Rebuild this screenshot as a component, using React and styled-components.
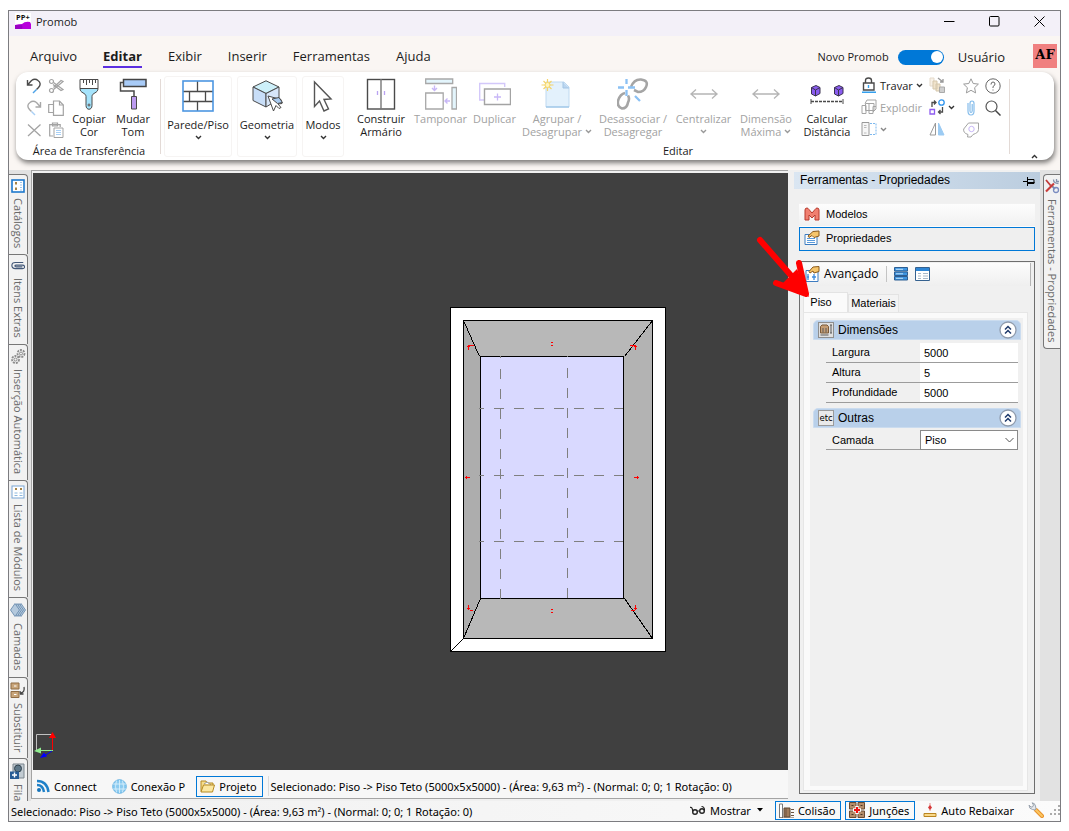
import React from "react"
import styled, { createGlobalStyle } from "styled-components"

const GlobalStyle = createGlobalStyle`
    * {
        box-sizing: border-box;
    }

    body {
        margin: 0;
        background: #FFFFFF;
        color: #1C1C1C;
        font-family: "Open Sans", "Noto Sans", sans-serif;
        font-size: 11px;
        line-height: 13px;
    }

    button, input, select {
        font: inherit;
        color: inherit;
    }

    button {
        display: flex;
        align-items: center;
        padding: 0;
        border: none;
        background: none;
        white-space: nowrap;
        cursor: pointer;
    }

    svg {
        display: block;
        flex: none;
    }
`

/* ---------- window ---------- */

const Page = styled.div`
    height: 100vh;
    padding: 10px 8px 9px;
`
const Window = styled.div`
    display: flex;
    flex-direction: column;
    height: 100%;
    border: 1px solid #7C7C80;
    background: #FAF6F3;
    overflow: hidden;
`
const TitleBar = styled.header`
    display: flex;
    align-items: center;
    gap: 5px;
    height: 25px;
    padding: 0 15px 5px 6px;
    flex: none;
    background: #F3F0F8;
`
const WindowButtons = styled.div`
    display: flex;
    gap: 34px;
    margin-left: auto;
`
const MenuBar = styled.div`
    display: flex;
    align-items: center;
    height: 36px;
    flex: none;
    padding: 6px 3px 0 21px;
    font-size: 13px;
    line-height: 18px;
`
const Menu = styled.nav`
    display: flex;
    gap: 26px;
`
const MenuItem = styled.a`
    padding-bottom: 1px;
    color: #1C1C1C;
    text-decoration: none;
    border-bottom: 2px solid ${({ $active }) => ($active ? "#5B2FE0" : "transparent")};
    font-weight: ${({ $active }) => ($active ? 700 : 400)};
`
const UserArea = styled.div`
    display: flex;
    align-items: center;
    gap: 9px;
    margin-left: auto;
`
const ToggleLabel = styled.label`
    font-size: 11px;
`
const Toggle = styled.input`
    appearance: none;
    display: flex;
    align-items: center;
    justify-content: flex-end;
    width: 46px;
    height: 15px;
    margin: 0 5px 0 0;
    padding: 0 1px;
    border-radius: 8px;
    background: #0078D7;

    &::before {
        content: "";
        width: 12px;
        height: 12px;
        border-radius: 50%;
        background: #FFFFFF;
    }
`
const Avatar = styled.div`
    display: flex;
    justify-content: center;
    width: 24px;
    height: 24px;
    margin: 0 0 2px 19px;
    background: #F08080;
    color: #000000;
    font: 700 13px/22px "DejaVu Serif", serif;
`

/* ---------- ribbon ---------- */

const Ribbon = styled.section`
    display: flex;
    height: 88px;
    flex: none;
    margin: 0 6px 0 7px;
    padding: 3px 8px 3px 7px;
    border-radius: 12px;
    background: #FFFFFF;
    box-shadow: 1px 3px 5px #00000080;
`
const Group = styled.div`
    display: flex;
    flex-direction: column;
    justify-content: space-between;
    padding: ${({ $pad }) => $pad};
`
const GroupRow = styled.div`
    display: flex;
`
const GroupTitle = styled.div`
    text-align: center;
`
const Divider = styled.div`
    width: 1px;
    margin: 4px 3px 3px 0;
    background: #E3DAD6;
`
const IconGrid = styled.div`
    display: grid;
    grid-template-columns: repeat(${({ $cols }) => $cols}, ${({ $width }) => $width || 22}px);
    grid-auto-rows: 22px;
    height: 66px;
`
const IconButton = styled.button`
    justify-content: center;
`
const Tool = styled.button`
    flex-direction: column;
    width: ${({ $width }) => $width}px;
    padding-top: 3px;
    color: ${({ $off }) => ($off ? "#A2A2A2" : "#1C1C1C")};

    svg {
        margin-bottom: 2px;
    }
`
const ToolCard = styled.button`
    flex-direction: column;
    width: ${({ $width }) => $width}px;
    margin: 1px 5px 0 0;
    padding-top: 3px;
    border: 1px solid #F6F4F3;
    border-radius: 3px;

    svg {
        margin-bottom: 6px;
    }

    svg + svg {
        margin: 4px 0 0;
    }
`
const LabelLine = styled.span`
    display: flex;
    align-items: center;
    gap: 3px;
    min-height: 13px;

    svg {
        margin: 0;
    }
`
const SmallTools = styled.div`
    display: grid;
    grid-auto-rows: 22px;
    width: 68px;
    margin-left: 2px;
`
const SmallTool = styled.button`
    gap: 3px;
    padding-bottom: 2px;
    color: ${({ $off }) => ($off ? "#A2A2A2" : "#1C1C1C")};
`
const Collapse = styled.button`
    align-items: flex-end;
    margin-left: auto;
    padding: 0 8px 0 0;

    svg {
        margin-bottom: -2px;
    }
`

/* ---------- workspace ---------- */

const Workspace = styled.main`
    display: flex;
    flex: 1;
    min-height: 0;
    margin-top: 10px;
    background: #F0F0F0;
`
const SideStrip = styled.div`
    display: flex;
    flex-direction: column;
    align-items: ${({ $right }) => ($right ? "flex-end" : "flex-start")};
    flex: none;
    width: ${({ $right }) => ($right ? 20 : 22)}px;
    padding: 4px 0 2px;
    overflow: hidden;
    background: #E2E2E2;
`
const SideTab = styled.button`
    flex: none;
    gap: 5px;
    width: ${({ $right }) => ($right ? 17 : 19)}px;
    padding: ${({ $right }) => ($right ? "3px 0 5px" : "4px 0 6px")};
    border: 1px solid #777777;
    border-width: ${({ $right }) => ($right ? "1px 0 1px 1px" : "1px 1px 0 0")};
    border-radius: ${({ $right }) => ($right ? "4px 0 0 4px" : "0 4px 0 0")};
    background: #F2F2F2;
    color: #6A6A6A;
    writing-mode: vertical-rl;
`
const Center = styled.div`
    display: flex;
    flex-direction: column;
    flex: 1;
    min-width: 0;
    margin-bottom: 2px;
    border: 1px solid #A4A4A4;
    border-right: none;
`
const Viewport = styled.div`
    position: relative;
    flex: 1;
    min-height: 0;
    margin: 2px 0 0 1px;
    overflow: hidden;
    background: #404040;
`
const Room = styled.svg`
    position: absolute;
    left: 417px;
    top: 134px;
`
const Axes = styled.svg`
    position: absolute;
    left: 0;
    bottom: 12px;
`
const ViewBar = styled.div`
    display: flex;
    align-items: center;
    height: 28px;
    flex: none;
    padding-top: 4px;
    background: #F7F7F7;
    font-family: "Noto Sans", "Open Sans", sans-serif;
`
const BarButton = styled.button`
    gap: 4px;
    height: ${({ $tall }) => ($tall ? 21 : 19)}px;
    padding: 0 5px 0 3px;
    border: 1px solid ${({ $active }) => ($active ? "#0078D7" : "transparent")};
    margin-right: ${({ $tall }) => ($tall ? 5 : 4)}px;
    color: #000000;
`
const ViewInfo = styled.span`
    padding: 4px 0 3px 2px;
    border-left: 1px solid #DCDCDC;
    white-space: nowrap;
    color: #000000;
`

/* ---------- property panel ---------- */

const Panel = styled.aside`
    position: relative;
    display: flex;
    flex-direction: column;
    width: 252px;
    flex: none;
    padding: 2px 0 7px 6px;
    color: #000000;
    font-family: "Liberation Sans", Arial, sans-serif;
    font-size: 12px;
`
const PanelHeader = styled.div`
    display: flex;
    align-items: center;
    justify-content: space-between;
    height: 17px;
    margin-bottom: 14px;
    padding: 0 5px 0 6px;
    background: linear-gradient(90deg, #DAE6F2, #BBCDDF);
`
const PanelRow = styled.button`
    gap: 6px;
    height: 24px;
    margin: 0 5px;
    padding: 0 4px 2px;
    border: 1px solid ${({ $active }) => ($active ? "#0078D7" : "transparent")};
    background: ${({ $active }) => ($active ? "#EFEFEF" : "linear-gradient(#FDFDFD, #F1F1F1)")};
    font-size: 11px;
`
const PanelBox = styled.div`
    display: flex;
    flex-direction: column;
    flex: 1;
    min-height: 0;
    margin: 10px 5px 0;
    padding: 1px 6px 2px 3px;
    border: 1px solid #6E6E6E;
    background: #F0F0F0;
`
const PanelTools = styled.div`
    display: flex;
    align-items: center;
    gap: 7px;
    height: 23px;
    flex: none;
    margin-right: -3px;
    padding: 0 0 2px 2px;
    border-right: 1px solid #B5B5B5;
    background: linear-gradient(#FCFCFC, #EFEFEF);
    font: 12px/14px "Open Sans", sans-serif;

    button {
        gap: 3px;
    }
`
const ToolDivider = styled.span`
    width: 1px;
    height: 16px;
    background: #C4C4C4;
`
const Tabs = styled.div`
    display: flex;
    align-items: flex-end;
    flex: none;
    height: 26px;
    padding-top: 6px;
`
const Tab = styled.button`
    justify-content: center;
    width: ${({ $active }) => ($active ? 45 : 51)}px;
    height: ${({ $active }) => ($active ? 20 : 18)}px;
    padding-right: ${({ $active }) => ($active ? 9 : 0)}px;
    border: 1px solid #E3E3E3;
    border-bottom: none;
    background: ${({ $active }) => ($active ? "#FAFAFA" : "#F3F3F3")};
    font-size: 11px;
`
const TabPage = styled.div`
    flex: 1;
    min-height: 0;
    padding: 5px 4px 4px 6px;
    border: 1px solid #E6E6E6;
    background: #FAFAFA;
`
const PageBody = styled.form`
    height: 100%;
    padding: 2px 2px 0 3px;
    background: #F0F0F0;
    font-size: 11px;
`
const SectionHead = styled.div`
    display: flex;
    align-items: center;
    gap: 4px;
    height: 20px;
    margin-bottom: ${({ $gap }) => $gap}px;
    padding: 0 3px 0 4px;
    border: 1px solid #CBDCEF;
    border-radius: 5px 5px 0 0;
    background: #B9D0EA;
    font-size: 12px;

    button {
        margin-left: auto;
    }
`
const Field = styled.div`
    display: grid;
    grid-template-columns: 94px 1fr;
    align-items: center;
    height: 20px;
    margin: 0 3px 0 13px;
    border-bottom: 1px solid #9C9C9C;

    label {
        padding-left: 6px;
    }
`
const Fields = styled.div`
    margin-bottom: 5px;
`
const TextBox = styled.input`
    width: 100%;
    min-width: 0;
    height: 19px;
    padding: 0 4px;
    border: none;
    background: #FFFFFF;
`
const SelectBox = styled.div`
    display: grid;
    align-items: center;

    > * {
        grid-area: 1 / 1;
    }

    svg {
        justify-self: end;
        margin-right: 4px;
        pointer-events: none;
    }
`
const Select = styled.select`
    appearance: none;
    width: 100%;
    height: 20px;
    padding: 0 4px;
    border: 1px solid #8A8A8A;
    border-radius: 0;
    background: #FFFFFF;
`
const Pointer = styled.svg`
    position: absolute;
    left: -33px;
    top: 65px;
    z-index: 2;
    pointer-events: none;
`

/* ---------- status bar ---------- */

const StatusBar = styled.footer`
    display: flex;
    align-items: center;
    height: 20px;
    flex: none;
    padding-left: 2px;
    background: linear-gradient(90deg, #F0F0F0, #FBFBFB);
    color: #000000;
    font-family: "Noto Sans", "Open Sans", sans-serif;
    white-space: nowrap;
`
const StatusActions = styled.div`
    display: flex;
    align-items: center;
    margin: 0 0 2px auto;

    button:last-of-type {
        margin-right: 0;
        padding-right: 4px;
    }
`

/* ---------- icons ---------- */

const Icon = ({ w = 16, h = w, box, children }) => (
    <svg width={w} height={h} viewBox={box || `0 0 ${w} ${h}`} fill="none" stroke="#4A4A4A" aria-hidden="true">
        {children}
    </svg>
)

const Chevron = ({ color = "#333333", up }) => (
    <Icon w={7} h={5}>
        <path d={up ? "M1 4 3.5 1.5 6 4" : "M1 1 3.5 3.5 6 1"} stroke={color} strokeWidth="1.4" />
    </Icon>
)

const AppIcon = () => (
    <Icon>
        <rect width="16" height="16" fill="#FFFFFF" stroke="none" />
        <text x="1" y="7" fontSize="7.5" fontWeight="700" fill="#111111" stroke="none" fontFamily="Open Sans">PP+</text>
        <path d="M0 12q4-1 7-1 3-3 8-2l1 2v5H0z" fill="#B800DC" stroke="none" />
        <path d="M0 12h7q1 2 0 4H0z" fill="#9A00C4" stroke="none" />
    </Icon>
)
const UndoIcon = ({ color = "#4A4A4A", tip = "#4FA3E8", flip }) => (
    <Icon>
        <g transform={flip ? "matrix(-1 0 0 1 16 0)" : undefined} strokeWidth="1.4">
            <path d="M1.5 2v5h5M1.5 7l4-4.500Q9 0 12 2.500q4 3 .5 7l-2 2" stroke={color} />
            <path d="M10.500 11.500 7 15" stroke={tip} />
        </g>
    </Icon>
)
const CutIcon = () => (
    <Icon>
        <g stroke="#A3A3A3" strokeWidth="1.2">
            <circle cx="3.500" cy="3.500" r="2" />
            <circle cx="3.500" cy="12.500" r="2" />
            <path d="M5.500 4.500 15 11.500l-2 1-8-6M5.500 11.500 15 3.500l-2-1-7.500 7" />
        </g>
    </Icon>
)
const CopyIcon = () => (
    <Icon>
        <g stroke="#A3A3A3" strokeWidth="1.2">
            <path d="M5 12.500H.7v-8h5" />
            <path d="M5.500 15.300V1h6L15.300 5v10.300z" fill="#FFFFFF" />
            <path d="M11.500 1v4h3.800" />
        </g>
    </Icon>
)
const DeleteIcon = () => (
    <Icon>
        <path d="M2 2.500 14.500 14M14.500 2.500 2 14" stroke="#A3A3A3" strokeWidth="1.3" />
    </Icon>
)
const PasteIcon = () => (
    <Icon>
        <path d="M5 14H1.700V2.700h10.500V5M4.500 1h5v3h-5z" stroke="#A3A3A3" strokeWidth="1.2" />
        <path d="M6 6h9v9.500H6z" fill="#FFFFFF" stroke="#A3A3A3" />
        <path d="M8 8.500h5M8 10.500h5M8 12.500h5" stroke="#A9D0F5" />
    </Icon>
)
const BrushIcon = () => (
    <Icon w={32}>
        <path d="M7 1.500h18v9H7zM10.500 2v3M13.500 2v5M16.500 2v3M19.500 2v5M22.500 2v3" />
        <path d="M7 10.500h18c0 5-6 4-6 8v9c0 5-6 5-6 0v-9c0-4-6-3-6-8z" fill="#A5E3FB" />
        <circle cx="16" cy="27" r="1" fill="#FFFFFF" />
    </Icon>
)
const RollerIcon = () => (
    <Icon w={32}>
        <path d="M6.500 1.500H29v7H6.500z" fill="#A8CBF7" stroke="#444444" strokeWidth="1.500" />
        <path d="M6 4.500H3.500v8.500h13.500v6" strokeWidth="1.500" />
        <path d="M14.500 18.500h5v12.500h-5z" fill="#BC9BF0" />
    </Icon>
)
const WallIcon = () => (
    <Icon w={32}>
        <path d="M1 11.500h30M1 21.500h30M15.500 1v10M15.500 22v9M7.500 12v9M23.500 12v9" strokeWidth="1.300" />
        <rect x="1" y="1" width="30" height="30" stroke="#4D96E2" strokeWidth="1.600" />
    </Icon>
)
const CubeIcon = () => (
    <Icon w={32}>
        <path d="M2 7 15 .8 28 7 15 13.500z" fill="#CDF0FA" />
        <path d="M2 7v13.500L15 27V13.500z" fill="#C8DEF8" />
        <path d="M15 13.500 28 7v12l-13 8z" fill="#D7E6F9" />
        <path d="m17 16 13 3.500 1 4-4 .5 3 3.500-2 1-3-3-2.500 5.500z" fill="#FFFFFF" />
        <path d="m21 19 7-1.500 3.500 5-5 1z" fill="#A9CBF0" />
    </Icon>
)
const CursorIcon = () => (
    <Icon w={32}>
        <path d="M7.500 2v24.500l5-5.500 4.500 10 4.500-2-4.500-9.500 7-.5z" stroke="#555555" strokeWidth="1.400" />
    </Icon>
)
const CabinetIcon = () => (
    <Icon w={32}>
        <rect x="2.500" y="1.500" width="27" height="29.500" strokeWidth="1.400" />
        <path d="M16 1v30" stroke="#777777" strokeWidth="1.400" />
        <path d="M12.500 13v4M19.500 13v4" stroke="#B9A2F2" strokeWidth="1.300" />
    </Icon>
)
const TamponarIcon = () => (
    <Icon w={32}>
        <g stroke="#A8A8A8" strokeWidth="1.300">
            <path d="M.7 1h27v4.500H.7zM27 9.500h4.500V31H27z" fill="#E3F5FC" />
            <path d="M.7 15h17.500v16H.7z" />
        </g>
        <path d="M9.500 7.500V12m-2.500-2 2.500 2.500L12 10M25 23h-5m2.500-2.500L20 23l2.500 2.500" stroke="#C8B7F7" strokeWidth="1.400" />
    </Icon>
)
const DuplicateIcon = () => (
    <Icon w={32}>
        <path d="M5 22H.7V5.500h25V9" stroke="#D3C8FA" strokeWidth="1.400" />
        <path d="M5.500 11h26v15.500h-26z" fill="#FFFFFF" stroke="#A3A3A3" strokeWidth="1.400" />
        <path d="M18.500 15.500v7M15 19h7" stroke="#C8B7F7" strokeWidth="1.300" />
    </Icon>
)
const GroupIcon = () => (
    <Icon w={32}>
        <path d="M5 4h18l5 5v20H5z" fill="#E3F1FC" stroke="#BFD9F0" />
        <path d="M22 4v6h6" fill="#BBD6F0" stroke="#A3C5E5" />
        <path d="M5 29h23" stroke="#8DBCE4" />
        <path d="M6.500 1v12M.5 7h12M2.500 3l8 8M10.500 3l-8 8" stroke="#F4D46A" strokeWidth="1.200" />
        <circle cx="6.500" cy="7" r="2.500" fill="#FFF5C0" stroke="#F4D46A" />
    </Icon>
)
const UnlinkIcon = () => (
    <Icon w={32}>
        <path d="M14 9q3-8 10-7.500 8 1 5 7.500-2 5-8 5l-4-2M8 15q-5 1-7 8-1 6 4 7.500 5 0 6-6 2-4 0-7" stroke="#A5A5A5" strokeWidth="2.600" />
        <path d="M9.500 1v5M9.500 12v6M1 9.500h6M11 9.500h7M18 18l5 5" stroke="#8BC1F4" strokeWidth="2.300" />
    </Icon>
)
const StretchIcon = () => (
    <Icon w={32}>
        <path d="M2.500 16h27M8 11.500 3 16l5 4.500M24 11.500l5 4.500-5 4.500" stroke="#B5B5B5" strokeWidth="1.300" />
    </Icon>
)
const DistanceIcon = () => (
    <Icon w={34} h={32}>
        {[1, 24].map((x) => (
            <g key={x} transform={`translate(${x} 7)`} stroke="#3B3350">
                <path d="M.5 2.500 5 .5l4 2v6l-4.500 2.500-4-2z" fill="#8A5CF0" />
                <path d="M.5 2.500 4.500 5l4.500-2.500M4.500 5v6" />
            </g>
        ))}
        <path d="M1 23.500h32" strokeDasharray="3 1" strokeWidth="1.400" />
        <path d="M1 21v5M33 21v5" />
    </Icon>
)
const LockIcon = () => (
    <Icon>
        <path d="M4.500 6V3.500q0-2.500 3-2.500t3 2.500V6" strokeWidth="1.400" />
        <path d="M2.500 6h10.500v7H2.500z" strokeWidth="1.400" />
        <path d="M7.500 8v3M1 15.300h14" stroke="#35A0EE" strokeWidth="1.400" />
    </Icon>
)
const ExplodeIcon = () => (
    <Icon>
        <g stroke="#A5A5A5">
            <path d="M1 6.500h4v8H1zM4 4.500 6 1h9v9l-3 3M4.500 4.500h8.500v7H4.500zM8 4.500v10h4v-7h3" />
        </g>
    </Icon>
)
const MirrorBoxIcon = () => (
    <Icon>
        <path d="M1 1.500h7v13H1z" fill="#F7F7F7" stroke="#999999" />
        <path d="M3 4.500h2.500M3 6.500h2.500M3 12h2.500" stroke="#BBBBBB" />
        <path d="M9 2.500h6v11H9" stroke="#7DB8EE" strokeDasharray="2 1" />
    </Icon>
)
const StepsIcon = () => (
    <Icon>
        <path d="M1 1h4v8H1z" fill="#F8F1E7" stroke="#E4DACB" />
        <path d="M4 4h4v8H4zM7 7h4v7H7z" fill="#F0E3CC" stroke="#D5C7AC" />
        <path d="M10.500 10h5v5.500h-5z" fill="#CFCFCF" stroke="#AAAAAA" />
        <path d="M9 1l5 4m0-3v3h-3" stroke="#999999" strokeWidth="1.300" />
    </Icon>
)
const SwapIcon = () => (
    <Icon>
        <path d="M1 10.500h4.500V15H1z" stroke="#8E5CF0" strokeWidth="1.300" />
        <circle cx="12.500" cy="3.500" r="2.700" stroke="#2E94EE" strokeWidth="1.300" />
        <path d="M3 8V3.500h4M5 1.500l2 2-2 2M13.500 8v5h-4M11.500 11l-2 2 2 2" strokeWidth="1.300" />
    </Icon>
)
const FlipIcon = () => (
    <Icon>
        <path d="M6.500 2v12H1z" stroke="#999999" />
        <path d="M9.500 2v12H15z" fill="#9CCBF3" stroke="#9CCBF3" />
    </Icon>
)
const StarIcon = () => (
    <Icon>
        <path d="m8 .8 2.200 4.700 5.200.6-3.800 3.600 1 5.200L8 12.300l-4.600 2.600 1-5.200L.6 6.100l5.200-.6z" stroke="#9A9A9A" />
    </Icon>
)
const HelpIcon = () => (
    <Icon>
        <circle cx="8" cy="8" r="7.200" stroke="#666666" />
        <path d="M6 6.500q0-2.500 2-2.500t2 2Q10 7.500 8 8.500V10M8 11.500v1" stroke="#666666" />
    </Icon>
)
const ClipIcon = ({ color = "#86BDEB" }) => (
    <Icon>
        <path d="M5 3v8q0 4 3 4t3-4V3.500Q11 1 9 1T7 3.500V11q0 1.500 1 1.500T9.200 11V4" stroke={color} strokeWidth="1.200" />
    </Icon>
)
const SearchIcon = () => (
    <Icon>
        <circle cx="6.500" cy="6.500" r="5.500" stroke="#555555" strokeWidth="1.200" />
        <path d="m10.500 10.500 5 5" stroke="#444444" strokeWidth="1.500" />
    </Icon>
)
const TagIcon = () => (
    <Icon>
        <path d="M5.500 1h10v6.500q0 3-3 4l-2.500 1-2 2.500H4.500l.5-2.500Q0 11 .7 7L5.500 1z" stroke="#A3A3A3" />
        <circle cx="8.500" cy="7" r="2.700" stroke="#C8B7F7" />
    </Icon>
)

const CatalogIcon = () => (
    <Icon w={14}>
        <rect x="1" y="1" width="12" height="12" fill="#FFFFFF" stroke="#1D78CC" strokeWidth="1.600" />
        <path d="M5 3v2.500M5 8.500V11" stroke="#A78344" strokeWidth="2" />
        <path d="M9 3.500h2M9 6h2M9 8.500h2M9 11h2" stroke="#9CC4EA" />
    </Icon>
)
const SideClipIcon = () => (
    <Icon w={14} box="0 0 16 16">
        <path d="M14 4H5Q1 4 1 7.500T5 11h8q2.500 0 2.500-2T13 7H6Q4.500 7 4.500 8T6 9h7" stroke="#435878" strokeWidth="1.300" />
    </Icon>
)
const GearsIcon = () => (
    <Icon w={15}>
        <g stroke="#8C8C8C">
            <circle cx="10" cy="4.500" r="3.500" strokeDasharray="2 1" strokeWidth="1.800" />
            <circle cx="10" cy="4.500" r="1.500" />
            <circle cx="4.500" cy="10.500" r="3.500" strokeDasharray="2 1" strokeWidth="1.800" />
            <circle cx="4.500" cy="10.500" r="1.500" />
        </g>
    </Icon>
)
const ModuleIcon = () => (
    <Icon w={14}>
        <rect x="1" y="1" width="12" height="12" fill="#FFFFFF" stroke="#7AA6D4" />
        <path d="M5 3v2M10 3v2" stroke="#A78344" strokeWidth="2" />
        <path d="M3.500 8h3M8.500 8h3M3.500 10.500h3M8.500 10.500h3" stroke="#8DB8DE" />
    </Icon>
)
const LayersIcon = () => (
    <Icon>
        {[11, 9, 7, 5].map((x) => (
            <path key={x} d={`M${x} 1.500l4.500 6.500-4.500 6.500-4.500-6.500z`} fill="#B4C9DD" stroke="#5F84A8" strokeWidth=".8" />
        ))}
    </Icon>
)
const ReplaceIcon = () => (
    <Icon>
        <path d="M1 1h8v6H1zM1 9.500h8v6H1z" fill="#C8A57A" stroke="#8F6C45" />
        <path d="M4 4h2.500M4 12.500h2.500" stroke="#FFFFFF" />
        <path d="M11 11q4-1 3-6m-4 4 .5 3h3" stroke="#444444" strokeWidth="1.300" />
    </Icon>
)
const QueueIcon = () => (
    <Icon>
        <path d="M3 1h11v14H3z" fill="#C2CBD2" stroke="#7A858D" />
        <circle cx="8" cy="5.500" r="3.500" fill="#5E7788" stroke="#32424D" />
        <path d="M0 8.500h9V16H0z" fill="#285C95" stroke="none" />
        <path d="M4.500 9.500v5M2 12h5" stroke="#FFFFFF" strokeWidth="1.400" />
    </Icon>
)
const WrenchesIcon = () => (
    <Icon>
        <path d="M2 2l5 6" stroke="#C23A38" strokeWidth="1.800" />
        <path d="M7 7l4 4" stroke="#7A8CA8" strokeWidth="1.800" />
        <path d="M2 13.500 10 5.500" stroke="#C93C3A" strokeWidth="2.200" />
        <path d="M9.500 1.500q0 4 5 4M12.500 1v2.500H15" stroke="#8494AE" strokeWidth="1.300" />
        <circle cx="12" cy="12" r="2.500" stroke="#7A8CC0" strokeWidth="1.300" />
    </Icon>
)
const PinIcon = () => (
    <Icon w={12} h={10}>
        <path d="M0 5.500h4M4.500 1v9M4.500 3.500H11v4H4.500M5 6.500h6.500" stroke="#000000" />
    </Icon>
)
const ModelsIcon = () => (
    <Icon>
        <path d="M1 14V4q0-2 2-2 1 0 2 1.500L8 7l3-3.500Q12 2 13 2q2 0 2 2v10h-4V9l-3 3-3-3v5z" fill="#F07F70" stroke="#B8392C" />
    </Icon>
)
const PropsIcon = () => (
    <Icon>
        <path d="M1 4.500h12v10H1z" fill="#FFFFFF" stroke="#3D7CC0" />
        <path d="M3 8.500h8M3 10.500h8M3 12.500h8" stroke="#5B9BDB" />
        <path d="M4 6 9 1.500l6-.5v5l-5 1.500-2-2-3 2z" fill="#F6C56B" stroke="#8A5A1D" />
    </Icon>
)
const AdvancedIcon = () => (
    <Icon>
        <path d="M1 4.500h12v11H1z" fill="#FFFFFF" stroke="#3D7CC0" />
        <path d="M3 8v6M9 8v6M7 11h4M2 11h2" stroke="#3D8BDD" strokeWidth="1.300" />
        <path d="M4 5.500 8 1l6-.5v5L9 7 8 5 5 7z" fill="#F6C56B" stroke="#8A5A1D" />
    </Icon>
)
const ListIcon = () => (
    <Icon w={14}>
        {[0.5, 5, 9.5].map((y) => (
            <path key={y} d={`M.5 ${y}h13v3.500H.5z`} fill="#3F96E2" stroke="#2D5E92" />
        ))}
        <path d="M2 2.300h7M2 6.800h7M2 11.300h7" stroke="#BFE0FA" />
    </Icon>
)
const TableIcon = () => (
    <Icon w={15} h={14}>
        <path d="M.5.500h14v13H.5z" fill="#FFFFFF" stroke="#35618F" />
        <path d="M1 1h13v3H1z" fill="#2F86D5" stroke="none" />
        <path d="M3 6.500h3M8 6.500h5M3 9h3M8 9h5M3 11.500h3M8 11.500h5" stroke="#A8B8C8" />
    </Icon>
)
const DimensionIcon = () => (
    <Icon w={16}>
        <rect x=".5" y=".5" width="15" height="15" fill="#E0E0E0" stroke="#8E8E8E" />
        <path d="M2.500 4.500 4 3h5l1.500 1.500V11h-8z" fill="#C59D74" stroke="#7B5A38" />
        <path d="M5 6v4.500M8 6v4.500M2.500 13h8M13 3v8M12 3h2M12 11h2" stroke="#5A5A5A" />
    </Icon>
)
const EtcIcon = () => (
    <Icon w={16}>
        <rect x=".5" y=".5" width="15" height="15" fill="#EAEAEA" stroke="#9A9A9A" />
        <text x="1.500" y="11" fontSize="8.500" fill="#000000" stroke="none" fontFamily="DejaVu Sans">etc</text>
    </Icon>
)
const FoldIcon = () => (
    <Icon w={18}>
        <circle cx="9" cy="9" r="8" fill="#FFFFFF" stroke="#8F9BAC" strokeWidth="1.300" />
        <path d="M6 8.500 9 5.500l3 3M6 12.500l3-3 3 3" stroke="#1F3A6B" strokeWidth="1.500" />
    </Icon>
)

const FeedIcon = () => (
    <Icon w={14}>
        <circle cx="3" cy="11" r="2" fill="#1673B9" stroke="none" />
        <path d="M1 6q6 0 7 7M1 2q10 0 11.500 11" stroke="#1E80C8" strokeWidth="2.500" />
    </Icon>
)
const GlobeIcon = () => (
    <Icon w={15}>
        <circle cx="7.500" cy="7.500" r="6.800" fill="#8CCBF0" stroke="#66B3E3" />
        <path d="M1 5h13M1 10h13M7.500 1v13M4.500 1.500q-2 6 0 12M10.500 1.500q2 6 0 12" stroke="#DFF2FC" strokeWidth=".8" />
    </Icon>
)
const FolderIcon = () => (
    <Icon w={15} h={14}>
        <path d="M1 12.500V2h5l1 2h6v2" fill="#F6DD8C" stroke="#B58A23" />
        <path d="m4 5 3-2 4 3" fill="#FFFFFF" stroke="#999999" />
        <path d="M1 13 3.500 6h11l-2 7z" fill="#FBE7A1" stroke="#B58A23" />
    </Icon>
)
const GlassesIcon = () => (
    <Icon w={16} h={12}>
        <circle cx="5" cy="8" r="2.300" stroke="#222222" strokeWidth="1.400" />
        <circle cx="12" cy="7" r="2.300" stroke="#222222" strokeWidth="1.400" />
        <path d="M0 3.500q2.500-1 2.700 4M7.500 7h2M14.500 6.500q0-4-3-4" stroke="#222222" strokeWidth="1.200" />
    </Icon>
)
const CollisionIcon = () => (
    <Icon w={15}>
        <path d="M.5 1h3v14h-3z" fill="#FFFFFF" stroke="#777777" />
        <path d="M5 5h6v9H5z" fill="#A07B5A" stroke="#5D4632" />
        <path d="M7 5v9M12 6.500h3M12 9.500h3M12 12.500h3M1 15h14" stroke="#6B5340" />
    </Icon>
)
const JunctionIcon = () => (
    <Icon>
        <path d="M.5.500h6.500v6.500H.5zM9 .500h6.500v6.500H9zM.5 9h6.500v6.500H.5zM9 9h6.500v6.500H9z" fill="#B58D6A" stroke="#6B4C33" />
        <path d="M2.500 3.500h2M11.500 3.500h2M2.500 12.500h2M11.500 12.500h2" stroke="#4E3725" />
        <path d="M8 4v8M4 8h8" stroke="#FFFFFF" strokeWidth="3.500" />
        <path d="M8 5v6M5 8h6" stroke="#EE1111" strokeWidth="2.200" />
    </Icon>
)
const LowerIcon = () => (
    <Icon w={14}>
        <path d="M7 0v8" stroke="#E58A8A" />
        <path d="m7 2 2 2.500L7 7 5 4.500z" fill="#D63A3A" stroke="none" />
        <path d="M1 10.500h12v3H1z" fill="#F9D887" stroke="#B98420" />
    </Icon>
)
const WrenchIcon = () => (
    <Icon>
        <path d="m8 8 6 6" stroke="#E8912A" strokeWidth="4" strokeLinecap="round" />
        <path d="m8 8 6 6" stroke="#FBC763" strokeWidth="2" strokeLinecap="round" />
        <path d="M1 3q0 4 3.500 4.500L7 8l1-1-.5-3Q7 1 4 .8L5.500 3 4.500 5H3z" fill="#E6E9ED" stroke="#9AA3AE" />
    </Icon>
)
const GripIcon = () => (
    <Icon w={11} h={12}>
        <path d="M9 1h2v2H9zM5 5h2v2H5zM9 5h2v2H9zM1 9h2v2H1zM5 9h2v2H5zM9 9h2v2H9z" fill="#ABABAB" stroke="none" />
    </Icon>
)

/* ---------- data ---------- */

const menus = ["Arquivo", "Editar", "Exibir", "Inserir", "Ferramentas", "Ajuda"]

const clipboard = [
    ["Desfazer", <UndoIcon />],
    ["Recortar", <CutIcon />],
    ["Refazer", <UndoIcon color="#A8A8A8" tip="#A9D0F5" flip />],
    ["Copiar", <CopyIcon />],
    ["Excluir", <DeleteIcon />],
    ["Colar", <PasteIcon />],
]

const cards = [
    { label: "Parede/Piso", icon: <WallIcon />, width: 68 },
    { label: "Geometria", icon: <CubeIcon />, width: 60 },
    { label: "Modos", icon: <CursorIcon />, width: 42 },
]

const tools = [
    { lines: ["Construir", "Armário"], icon: <CabinetIcon />, width: 58 },
    { lines: ["Tamponar"], icon: <TamponarIcon />, width: 61, off: true },
    { lines: ["Duplicar"], icon: <DuplicateIcon />, width: 47, off: true },
    { lines: ["Agrupar /", "Desagrupar"], icon: <GroupIcon />, width: 78, off: true, drop: true },
    { lines: ["Desassociar /", "Desagregar"], icon: <UnlinkIcon />, width: 74, off: true },
    { lines: ["Centralizar", ""], icon: <StretchIcon />, width: 67, off: true, drop: true },
    { lines: ["Dimensão", "Máxima"], icon: <StretchIcon />, width: 58, off: true, drop: true },
    { lines: ["Calcular", "Distância"], icon: <DistanceIcon />, width: 64 },
]

const sideTabs = [
    ["Catálogos", <CatalogIcon />],
    ["Itens Extras", <SideClipIcon />],
    ["Inserção Automática", <GearsIcon />],
    ["Lista de Módulos", <ModuleIcon />],
    ["Camadas", <LayersIcon />],
    ["Substituir", <ReplaceIcon />],
    ["Fila", <QueueIcon />],
]

const dimensions = [
    ["Largura", "5000"],
    ["Altura", "5"],
    ["Profundidade", "5000"],
]

const selection = "Selecionado: Piso -> Piso Teto (5000x5x5000) - (Área: 9,63 m²) - (Normal: 0; 0; 1 Rotação: 0)"

/* ---------- parts ---------- */

const RibbonTool = ({ lines, icon, width, off, drop }) => (
    <Tool $width={width} $off={off}>
        {icon}
        {lines.map((line, i) => (
            <LabelLine key={i}>
                {line}
                {drop && i === lines.length - 1 && <Chevron color={off ? "#999999" : "#333333"} />}
            </LabelLine>
        ))}
    </Tool>
)

const RoomPlan = () => (
    <Room width="216" height="345" viewBox="0 0 216 345" fill="none" stroke="#000000" shapeRendering="crispEdges">
        <rect x=".5" y=".5" width="215" height="344" fill="#FFFFFF" />
        <rect x="13.500" y="13.500" width="189" height="318" fill="#B8B8B8" />
        <path d="M14 14l16 35v243l-16 39z" fill="#ADADAD" stroke="none" />
        <path d="M202 14l-28 35v243l28 39z" fill="#B3B3B3" stroke="none" />
        <rect x="30.500" y="49.500" width="143" height="242" fill="#D9D9FF" />
        <path d="M13.500 13.500l16 36M202.500 13.500l-28 36M202.500 331.500l-28-40M13.500 331.500l17-40M.5 344.500l13-13" />
        <path d="M50.500 62v230M117.500 61v230" stroke="#808080" strokeDasharray="10 10" />
        <path d="M44 101.500h129M44 168.500h129M44 234.500h129" stroke="#808080" strokeDasharray="10 10" />
        <path d="M29 101.500h5M29 168.500h5M29 234.500h5M50.500 49v2M117.500 49v1" stroke="#808080" />
        <g stroke="#FF0000">
            <path d="M101 35.500h2M101 38.500h2M101 302.500h2M101 305.500h2" />
            <path d="M15 170.500h5M16.500 169v3M184 170.500h5M187.500 169v3" />
            <path d="M17 39.500h3M18.500 38v5M19 38.500h5M180 38.500h6M184 39.500h3M185.500 38v5M182.500 38v2" />
            <path d="M17 301.500h3M18.500 298v5M20 303.500h3M181 303.500h4M184 301.500h3M185.500 298v5" />
        </g>
    </Room>
)

export default function App() {
    return (
        <Page>
            <GlobalStyle />
            <Window>
                <TitleBar>
                    <AppIcon />
                    <span>Promob</span>
                    <WindowButtons>
                        <button aria-label="Minimizar">
                            <Icon w={11}><path d="M0 5.500h10.500" stroke="#000000" /></Icon>
                        </button>
                        <button aria-label="Maximizar">
                            <Icon w={11}><rect x=".5" y=".5" width="9.500" height="9.500" rx="1" stroke="#000000" /></Icon>
                        </button>
                        <button aria-label="Fechar">
                            <Icon w={11}><path d="m.5.500 10 10m0-10-10 10" stroke="#000000" /></Icon>
                        </button>
                    </WindowButtons>
                </TitleBar>

                <MenuBar>
                    <Menu>
                        {menus.map((menu) => (
                            <MenuItem key={menu} href="#" $active={menu === "Editar"}>{menu}</MenuItem>
                        ))}
                    </Menu>
                    <UserArea>
                        <ToggleLabel htmlFor="new-ui">Novo Promob</ToggleLabel>
                        <Toggle id="new-ui" type="checkbox" defaultChecked />
                        <span>Usuário</span>
                        <Avatar>AF</Avatar>
                    </UserArea>
                </MenuBar>

                <Ribbon>
                    <Group $pad="0 5px 0 0">
                        <GroupRow>
                            <IconGrid $cols={2}>
                                {clipboard.map(([label, icon]) => (
                                    <IconButton key={label} aria-label={label}>{icon}</IconButton>
                                ))}
                            </IconGrid>
                            <RibbonTool lines={["Copiar", "Cor"]} icon={<BrushIcon />} width={44} />
                            <RibbonTool lines={["Mudar", "Tom"]} icon={<RollerIcon />} width={44} />
                        </GroupRow>
                        <GroupTitle>Área de Transferência</GroupTitle>
                    </Group>
                    <Divider />
                    {cards.map(({ label, icon, width }) => (
                        <ToolCard key={label} $width={width}>
                            {icon}
                            {label}
                            <Chevron />
                        </ToolCard>
                    ))}
                    <Group $pad="0 5px 0 3px">
                        <GroupRow>
                            {tools.map((tool) => <RibbonTool key={tool.lines[0]} {...tool} />)}
                            <SmallTools>
                                <SmallTool><LockIcon />Travar<Chevron /></SmallTool>
                                <SmallTool $off><ExplodeIcon />Explodir</SmallTool>
                                <SmallTool $off aria-label="Espelhar caixa"><MirrorBoxIcon /><Chevron color="#888888" /></SmallTool>
                            </SmallTools>
                            <IconGrid $cols={1} $width={31}>
                                <SmallTool aria-label="Ordenar"><StepsIcon /></SmallTool>
                                <SmallTool aria-label="Trocar"><SwapIcon /><Chevron /></SmallTool>
                                <SmallTool aria-label="Espelhar"><FlipIcon /></SmallTool>
                            </IconGrid>
                            <IconGrid $cols={2}>
                                <IconButton aria-label="Favoritos"><StarIcon /></IconButton>
                                <IconButton aria-label="Ajuda"><HelpIcon /></IconButton>
                                <IconButton aria-label="Anexo"><ClipIcon /></IconButton>
                                <IconButton aria-label="Buscar"><SearchIcon /></IconButton>
                                <IconButton aria-label="Etiqueta"><TagIcon /></IconButton>
                            </IconGrid>
                        </GroupRow>
                        <GroupTitle>Editar</GroupTitle>
                    </Group>
                    <Divider />
                    <Collapse aria-label="Recolher"><Chevron up /></Collapse>
                </Ribbon>

                <Workspace>
                    <SideStrip>
                        {sideTabs.map(([label, icon]) => (
                            <SideTab key={label}>{icon}{label}</SideTab>
                        ))}
                    </SideStrip>

                    <Center>
                        <Viewport>
                            <RoomPlan />
                            <Axes width="24" height="28" viewBox="0 0 24 28" fill="none">
                                <path d="M3.500 20V4.500H19" stroke="#C0C0C0" />
                                <path d="M19.500 20V6" stroke="#FF0000" />
                                <path d="M16 8l3.500-6L23 8z" fill="#FF0000" />
                                <path d="M7 20.500h13" stroke="#90EE90" />
                                <path d="M8 17.500v6L1 21z" fill="#90EE90" />
                                <path d="m19 21-8 5" stroke="#0000FF" />
                                <path d="m11 22.500 3 4-7 1.500z" fill="#0000FF" />
                            </Axes>
                        </Viewport>
                        <ViewBar>
                            <BarButton $tall><FeedIcon />Connect</BarButton>
                            <BarButton $tall><GlobeIcon />Conexão P</BarButton>
                            <BarButton $tall $active><FolderIcon />Projeto</BarButton>
                            <ViewInfo>{selection}</ViewInfo>
                        </ViewBar>
                    </Center>

                    <Panel>
                        <PanelHeader>Ferramentas - Propriedades<PinIcon /></PanelHeader>
                        <PanelRow><ModelsIcon />Modelos</PanelRow>
                        <PanelRow $active><PropsIcon />Propriedades</PanelRow>
                        <PanelBox>
                            <PanelTools>
                                <button><AdvancedIcon />Avançado</button>
                                <ToolDivider />
                                <button aria-label="Lista"><ListIcon /></button>
                                <button aria-label="Tabela"><TableIcon /></button>
                            </PanelTools>
                            <Tabs>
                                <Tab $active>Piso</Tab>
                                <Tab>Materiais</Tab>
                            </Tabs>
                            <TabPage>
                                <PageBody>
                                    <SectionHead $gap={3}>
                                        <DimensionIcon />Dimensões
                                        <button type="button" aria-label="Recolher Dimensões"><FoldIcon /></button>
                                    </SectionHead>
                                    <Fields>
                                        {dimensions.map(([label, value]) => (
                                            <Field key={label}>
                                                <label htmlFor={label}>{label}</label>
                                                <TextBox id={label} defaultValue={value} />
                                            </Field>
                                        ))}
                                    </Fields>
                                    <SectionHead $gap={2}>
                                        <EtcIcon />Outras
                                        <button type="button" aria-label="Recolher Outras"><FoldIcon /></button>
                                    </SectionHead>
                                    <Field>
                                        <label htmlFor="layer">Camada</label>
                                        <SelectBox>
                                            <Select id="layer" defaultValue="Piso">
                                                <option>Piso</option>
                                            </Select>
                                            <Icon w={9} h={6}><path d="m.5 1 4 4 4-4" stroke="#555555" /></Icon>
                                        </SelectBox>
                                    </Field>
                                </PageBody>
                            </TabPage>
                        </PanelBox>
                        <Pointer width="60" height="64" viewBox="0 0 60 64" aria-hidden="true">
                            <path d="M5 5 47 53M44 28l7 31-30-11" fill="none" stroke="#FF0000" strokeWidth="6" strokeLinecap="round" strokeLinejoin="round" />
                            <path d="m42 34 12 28-27-13z" fill="#FF0000" />
                        </Pointer>
                    </Panel>

                    <SideStrip $right>
                        <SideTab $right><WrenchesIcon />Ferramentas - Propriedades</SideTab>
                    </SideStrip>
                </Workspace>

                <StatusBar>
                    <span>{selection}</span>
                    <StatusActions>
                        <BarButton><GlassesIcon />Mostrar
                            <Icon w={10} h={4}><path d="M2 0h6L5 3.500z" fill="#000000" stroke="none" /></Icon>
                        </BarButton>
                        <BarButton $active><CollisionIcon />Colisão</BarButton>
                        <BarButton $active><JunctionIcon />Junções</BarButton>
                        <BarButton><LowerIcon />Auto Rebaixar</BarButton>
                        <BarButton aria-label="Configurar"><WrenchIcon /></BarButton>
                        <GripIcon />
                    </StatusActions>
                </StatusBar>
            </Window>
        </Page>
    )
}
